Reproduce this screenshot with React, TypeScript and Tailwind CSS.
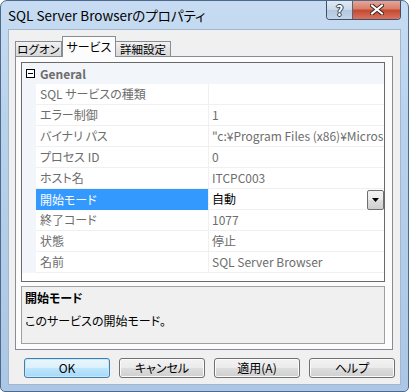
import React from "react";

const rows: { label: string; value: string; selected?: boolean }[] = [
  { label: "SQL サービスの種類", value: "" },
  { label: "エラー制御", value: "1" },
  { label: "バイナリ パス", value: "\"c:¥Program Files (x86)¥Micros" },
  { label: "プロセス ID", value: "0" },
  { label: "ホスト名", value: "ITCPC003" },
  { label: "開始モード", value: "自動", selected: true },
  { label: "終了コード", value: "1077" },
  { label: "状態", value: "停止" },
  { label: "名前", value: "SQL Server Browser" },
];

const Button = ({ label, primary }: { label: string; primary?: boolean }) => (
  <div
    className={
      primary
        ? "w-[86px] h-[20px] flex items-center justify-center rounded-[3px] border border-[#3c7fb1] bg-[linear-gradient(180deg,#eaf6fd_0%,#d9f0fc_50%,#bee6fd_51%,#a7d9f5_100%)] text-[12px] text-black shadow-[inset_0_0_0_1px_#c9e9fb]"
        : "w-[86px] h-[20px] flex items-center justify-center rounded-[3px] border border-[#707070] bg-[linear-gradient(180deg,#f2f2f2_0%,#ebebeb_50%,#dddddd_51%,#cfcfcf_100%)] text-[12px] text-black shadow-[inset_0_0_0_1px_#fbfbfb]"
    }
  >
    {label}
  </div>
);

export default function App() {
  return (
    <div className="w-[409px] h-[392px] bg-white">
      <div className="w-[409px] h-[392px] flex flex-col rounded-t-[7px] rounded-b-[5px] border border-[#4d6a8c] bg-[linear-gradient(180deg,#c7dcf2_0%,#b9d2ec_30%,#abc7e5_100%)] font-['Noto_Sans_CJK_JP','Noto_Sans',sans-serif] [font-feature-settings:'palt'] overflow-hidden">
        {/* Title bar */}
        <div className="h-[28px] flex items-start justify-between shrink-0">
          <div className="pl-[7px] pt-[4px] text-[13.5px] leading-[20px] text-black">
            SQL Server Browserのプロパティ
          </div>
          <div className="flex mr-[7px] -mt-px rounded-b-[4px] border border-t-0 border-[#3d5067] overflow-hidden">
            <div className="w-[26px] h-[19px] flex items-center justify-center border-r border-[#54667d] bg-[linear-gradient(180deg,#e3ecf6_0%,#cbd9e9_50%,#b3c6dc_51%,#c4d5e8_100%)]">
              <span className="text-[14px] leading-[14px] font-bold text-white [text-shadow:0_0_1px_#2c3e55,1px_0_0_#2c3e55,-1px_0_0_#2c3e55,0_1px_0_#2c3e55,0_-1px_0_#2c3e55]">
                ?
              </span>
            </div>
            <div className="w-[47px] h-[19px] flex items-center justify-center bg-[linear-gradient(180deg,#e9a99b_0%,#d9806d_45%,#c44a32_55%,#d97360_100%)]">
              <svg width="14" height="11" viewBox="0 0 14 11">
                <path d="M2 1.5 L12 9.5 M12 1.5 L2 9.5" stroke="#3a2420" strokeWidth="4" strokeLinecap="square" />
                <path d="M2 1.5 L12 9.5 M12 1.5 L2 9.5" stroke="#ffffff" strokeWidth="2" strokeLinecap="square" />
              </svg>
            </div>
          </div>
        </div>

        {/* Client area */}
        <div className="ml-[7px] w-[393px] h-[356px] border border-[#a3b8cf] bg-[#f0f0f0] flex flex-col">
          {/* Tabs */}
          <div className="h-[26px] flex items-end pl-[6px] shrink-0">
            <div className="w-[47px] h-[15px] flex items-center justify-center border border-b-0 border-[#898c95] bg-[linear-gradient(180deg,#f2f2f2_0%,#e3e3e3_50%,#d9d9d9_100%)] text-[11.5px] leading-[14px] text-black">
              ログオン
            </div>
            <div className="relative z-10 -mb-px w-[54px] h-[21px] flex items-start justify-center pt-[2px] border border-b-0 border-[#898c95] bg-[#fcfcfc] text-[12px] leading-[15px] text-black">
              サービス
            </div>
            <div className="w-[55px] h-[15px] flex items-center justify-center border border-b-0 border-l-0 border-[#898c95] bg-[linear-gradient(180deg,#f2f2f2_0%,#e3e3e3_50%,#d9d9d9_100%)] text-[11.5px] leading-[14px] text-black">
              詳細設定
            </div>
          </div>

          {/* Tab panel */}
          <div className="ml-[6px] w-[378px] h-[294px] border border-[#898c95] bg-[#fcfcfc] flex flex-col pl-[5px] pt-[5px]">
            {/* Property grid */}
            <div className="w-[364px] h-[220px] border border-[#6a6a6a] bg-white flex flex-col overflow-hidden text-[12px]">
              {/* Category */}
              <div className="h-[21px] flex items-center bg-[#f2f5fa] shrink-0">
                <div className="w-[14px] flex justify-end pr-[1px]">
                  <div className="w-[9px] h-[9px] border border-black bg-white flex items-center justify-center">
                    <div className="w-[5px] h-px bg-black" />
                  </div>
                </div>
                <span className="pl-[4px] font-bold text-[#6d6d6d]">General</span>
              </div>
              {rows.map((r) => (
                <div key={r.label} className="h-[21px] flex shrink-0">
                  <div className="w-[14px] bg-[#f2f5fa]" />
                  <div
                    className={
                      r.selected
                        ? "w-[173px] flex items-center pl-[4px] bg-[#3399ff] text-white border-r border-[#f0f0f0] whitespace-nowrap"
                        : "w-[173px] flex items-center pl-[4px] text-[#6d6d6d] border-b border-r border-[#f0f0f0] whitespace-nowrap"
                    }
                  >
                    {r.label}
                  </div>
                  <div
                    className={
                      r.selected
                        ? "flex-1 min-w-0 flex items-center pl-[3px] text-black border-b border-[#f0f0f0] relative"
                        : "flex-1 min-w-0 flex items-center pl-[3px] text-[#6d6d6d] border-b border-[#f0f0f0] whitespace-nowrap overflow-hidden"
                    }
                  >
                    {r.value}
                    {r.selected && (
                      <div className="absolute right-0 top-[1px] w-[17px] h-[20px] flex items-center justify-center rounded-[2px] border border-[#707070] bg-[linear-gradient(180deg,#f2f2f2_0%,#ebebeb_50%,#dddddd_51%,#cfcfcf_100%)]">
                        <svg width="7" height="4" viewBox="0 0 7 4">
                          <path d="M0 0 H7 L3.5 4 Z" fill="#000" />
                        </svg>
                      </div>
                    )}
                  </div>
                </div>
              ))}
            </div>

            {/* Description */}
            <div className="mt-[4px] w-[364px] h-[58px] border border-[#a0a0a0] bg-[#f0f0f0] pl-[3px] pt-[3px] text-[12px] text-black">
              <div className="font-bold leading-[16px]">開始モード</div>
              <div className="mt-[7px] leading-[16px]">このサービスの開始モード。</div>
            </div>
          </div>

          {/* Buttons */}
          <div className="mt-[8px] pl-[15px] flex gap-[9px]">
            <Button label="OK" primary />
            <Button label="キャンセル" />
            <Button label="適用(A)" />
            <Button label="ヘルプ" />
          </div>
        </div>
      </div>
    </div>
  );
}
